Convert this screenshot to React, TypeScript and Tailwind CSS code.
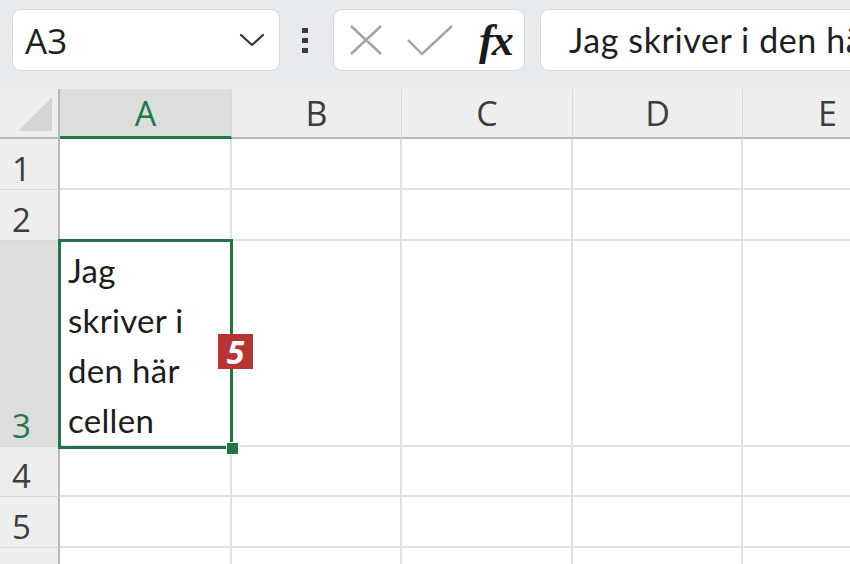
import React from "react"

const COLS = ["A", "B", "C", "D", "E"]
const COL_W = ["w-[172px]", "w-[170px]", "w-[171px]", "w-[170px]", "w-[170px]"]

const ROWS = [
  { n: "1", h: "h-[51px]" },
  { n: "2", h: "h-[51px]" },
  { n: "3", h: "h-[206px]" },
  { n: "4", h: "h-[50px]" },
  { n: "5", h: "h-[51px]" },
  { n: "6", h: "h-[51px]" },
]

function Chevron() {
  return (
    <svg width="26" height="16" viewBox="0 0 26 16" fill="none">
      <path d="M2 3 L13 13 L24 3" stroke="#333" strokeWidth="2.2" strokeLinecap="round" strokeLinejoin="round" />
    </svg>
  )
}

function CrossIcon() {
  return (
    <svg width="34" height="32" viewBox="0 0 34 32" fill="none">
      <path d="M2 2 L32 30 M32 2 L2 30" stroke="#a3a3a3" strokeWidth="2.4" />
    </svg>
  )
}

function CheckIcon() {
  return (
    <svg width="46" height="32" viewBox="0 0 46 32" fill="none">
      <path d="M1 16 L15 30 L45 2" stroke="#a3a3a3" strokeWidth="2.4" />
    </svg>
  )
}

function Toolbar() {
  return (
    <div className="flex h-[89px] items-start bg-[#e7ebee] pt-[9px] pl-[12px]">
      <div className="flex h-[62px] w-[268px] items-center justify-between rounded-[9px] border border-[#d3d7db] bg-white pl-[12px] pr-[14px]">
        <span className="text-[35px] leading-none text-[#1f1f1f]" style={{ fontFamily: '"Open Sans", sans-serif' }}>
          A3
        </span>
        <Chevron />
      </div>
      <div className="ml-[22px] mr-[25px] mt-[19px] flex flex-col gap-[5px]">
        <div className="h-[5px] w-[6px] bg-[#3a3a3a]" />
        <div className="h-[5px] w-[6px] bg-[#3a3a3a]" />
        <div className="h-[5px] w-[6px] bg-[#3a3a3a]" />
      </div>
      <div className="flex h-[62px] w-[192px] items-center rounded-[9px] border border-[#d3d7db] bg-white pl-[15px]">
        <CrossIcon />
        <div className="ml-[24px]">
          <CheckIcon />
        </div>
        <span
          className="ml-[26px] mt-[2px] text-[44px] font-bold italic leading-none tracking-[-2px] text-[#1a1a1a]"
          style={{ fontFamily: '"Liberation Serif", serif' }}
        >
          fx
        </span>
      </div>
      <div className="ml-[15px] flex h-[62px] flex-1 items-center overflow-hidden whitespace-nowrap rounded-l-[9px] border border-r-0 border-[#d3d7db] bg-white pl-[28px]">
        <span
          className="text-[34px] leading-none tracking-[0.6px] text-[#1f1f1f]"
          style={{ fontFamily: 'Lato, sans-serif' }}
        >
          Jag skriver i den här cellen
        </span>
      </div>
    </div>
  )
}

function HeaderRow() {
  return (
    <div className="flex h-[50px]">
      <div className="relative w-[60px] shrink-0 border-b-2 border-r-2 border-[#b8b8b8] bg-[#eeeeee]">
        <svg className="absolute right-[6px] bottom-[6px]" width="34" height="34" viewBox="0 0 34 34">
          <path d="M34 0 L34 34 L0 34 Z" fill="#d5d5d5" />
        </svg>
      </div>
      {COLS.map((c, i) => {
        const sel = c === "A"
        return (
          <div
            key={c}
            className={`${COL_W[i]} flex shrink-0 items-center justify-center border-r border-[#d8d8d8] ${
              sel ? "border-b-[3px] border-b-[#1f7a45] bg-[#dcdede] text-[#1f7a45]" : "border-b-2 border-b-[#b8b8b8] bg-[#eeeeee] text-[#3d3d3d]"
            } text-[34px] leading-none`}
            style={{ fontFamily: '"Open Sans", sans-serif' }}
          >
            {c}
          </div>
        )
      })}
    </div>
  )
}

function SelectedCell() {
  return (
    <div className="relative h-full w-full">
      <div className="absolute -left-[2px] -top-[2px] -right-[3px] -bottom-[4px] border-[3px] border-[#227447]" />
      <div className="absolute -right-[8px] -bottom-[9px] h-[11px] w-[11px] bg-[#227447] ring-1 ring-white" />
      <div
        className="flex flex-col pl-[8px] pt-[4px] text-[33px] leading-[50px] tracking-[0.3px] text-[#1c1c1c]"
        style={{ fontFamily: 'Lato, sans-serif' }}
      >
        <span>Jag</span>
        <span>skriver i</span>
        <span>den här</span>
        <span>cellen</span>
      </div>
      <div
        className="absolute -right-[23px] top-[93px] flex h-[35px] w-[35px] items-center justify-center bg-[#b83334] text-[32px] font-bold italic leading-none text-white"
        style={{ fontFamily: '"Open Sans", sans-serif' }}
      >
        5
      </div>
    </div>
  )
}

function BodyRow({ n, h }: { n: string; h: string }) {
  const sel = n === "3"
  return (
    <div className={`flex ${h}`}>
      <div
        className={`flex w-[60px] shrink-0 items-end justify-start border-b border-r-2 border-b-[#d8d8d8] border-r-[#b8b8b8] pl-[12px] pb-[4px] text-[33px] leading-none ${
          sel ? "bg-[#dcdede] text-[#1f7a45]" : "bg-[#eeeeee] text-[#3d3d3d]"
        }`}
        style={{ fontFamily: '"Open Sans", sans-serif' }}
      >
        {n}
      </div>
      {COLS.map((c, i) => (
        <div key={c} className={`${COL_W[i]} shrink-0 border-b-2 border-r-2 border-[#e1e1e1] bg-white`}>
          {sel && c === "A" ? <SelectedCell /> : null}
        </div>
      ))}
    </div>
  )
}

export default function App() {
  return (
    <div className="h-[564px] w-[850px] overflow-hidden bg-white">
      <Toolbar />
      <div className="flex flex-col">
        <HeaderRow />
        {ROWS.map((r) => (
          <BodyRow key={r.n} n={r.n} h={r.h} />
        ))}
      </div>
    </div>
  )
}
